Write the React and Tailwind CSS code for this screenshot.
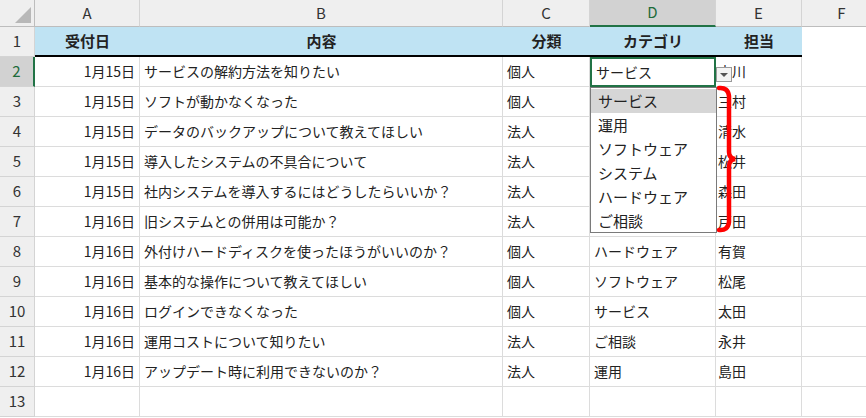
const cols = [
  { k: 'A', w: 105 },
  { k: 'B', w: 363 },
  { k: 'C', w: 87 },
  { k: 'D', w: 126 },
  { k: 'E', w: 86 },
  { k: 'F', w: 80 },
];

const rows = [
  ['1月15日', 'サービスの解約方法を知りたい', '個人', 'サービス', '吉川'],
  ['1月15日', 'ソフトが動かなくなった', '個人', '', '三村'],
  ['1月15日', 'データのバックアップについて教えてほしい', '法人', '', '清水'],
  ['1月15日', '導入したシステムの不具合について', '法人', '', '松井'],
  ['1月15日', '社内システムを導入するにはどうしたらいいか？', '法人', '', '森田'],
  ['1月16日', '旧システムとの併用は可能か？', '法人', '', '戸田'],
  ['1月16日', '外付けハードディスクを使ったほうがいいのか？', '個人', 'ハードウェア', '有賀'],
  ['1月16日', '基本的な操作について教えてほしい', '個人', 'ソフトウェア', '松尾'],
  ['1月16日', 'ログインできなくなった', '個人', 'サービス', '太田'],
  ['1月16日', '運用コストについて知りたい', '法人', 'ご相談', '永井'],
  ['1月16日', 'アップデート時に利用できないのか？', '法人', '運用', '島田'],
];

const options = ['サービス', '運用', 'ソフトウェア', 'システム', 'ハードウェア', 'ご相談'];
const font = { fontFamily: '"Noto Sans CJK JP", "Noto Sans", sans-serif' };

function RowHead({ n, active }) {
  return (
    <div className={`w-[35px] h-[30px] shrink-0 flex items-center justify-center text-[15px] border-r border-b border-[#d4d4d4] ${active ? 'bg-[#d2d2d2] text-[#1e6b3a] border-r-2 border-r-[#217346]' : 'bg-[#efefef] text-[#333]'}`}>{n}</div>
  );
}

export default function App() {
  return (
    <div className="relative w-[866px] h-[418px] bg-white overflow-hidden text-[14px] text-[#222]" style={font}>
      <div className="flex h-[27px]">
        <div className="w-[35px] shrink-0 bg-[#efefef] border-r border-b border-[#bdbdbd] relative">
          <div className="absolute right-[3px] bottom-[3px] w-0 h-0 border-l-[16px] border-l-transparent border-b-[16px] border-b-[#b8b8b8]" />
        </div>
        {cols.map(c => (
          <div key={c.k} style={{ width: c.w }} className={`shrink-0 flex items-center justify-center text-[15px] border-r border-[#d4d4d4] ${c.k === 'D' ? 'bg-[#d2d2d2] text-[#1e6b3a] border-b-2 border-b-[#217346]' : 'bg-[#efefef] text-[#333] border-b border-b-[#bdbdbd]'}`}>{c.k}</div>
        ))}
      </div>
      <div className="flex h-[30px]">
        <RowHead n={1} />
        <div className="flex shrink-0 bg-[#bfe3f3] border-b-2 border-black font-bold text-[15px]">
          <div className="w-[105px] shrink-0 pl-[30px] flex items-center">受付日</div>
          <div className="w-[363px] shrink-0 flex items-center justify-center">内容</div>
          <div className="w-[87px] shrink-0 flex items-center justify-center">分類</div>
          <div className="w-[126px] shrink-0 flex items-center justify-center">カテゴリ</div>
          <div className="w-[86px] shrink-0 flex items-center justify-center">担当</div>
        </div>
      </div>
      {Array.from({ length: 12 }).map((_, i) => {
        const r = rows[i] || ['', '', '', '', ''];
        return (
          <div key={i} className="flex h-[30px]">
            <RowHead n={i + 2} active={i === 0} />
            <div className="w-[105px] shrink-0 pr-[4px] flex items-center justify-end border-r border-b border-[#dcdcdc]">{r[0]}</div>
            <div className="w-[363px] shrink-0 pl-[4px] flex items-center border-r border-b border-[#dcdcdc]">{r[1]}</div>
            <div className="w-[87px] shrink-0 pl-[4px] flex items-center border-r border-b border-[#dcdcdc]">{r[2]}</div>
            <div className={`w-[126px] shrink-0 pl-[4px] flex items-center ${i === 0 ? 'border-2 border-[#217346]' : 'border-r border-b border-[#dcdcdc]'}`}>{r[3]}</div>
            <div className="w-[86px] shrink-0 pl-[2px] flex items-center border-r border-b border-[#dcdcdc]">{r[4]}</div>
            <div className="w-[80px] shrink-0 border-r border-b border-[#dcdcdc]" />
          </div>
        );
      })}
      <div className="absolute left-[590px] top-[87px] w-[127px] h-[146px] bg-white border border-[#7a7a7a] pt-[1px] text-[15px]">
        {options.map((o, i) => (
          <div key={o} className={`h-[24px] pl-[7px] flex items-center ${i === 0 ? 'bg-[#d6d6d6]' : ''}`}>{o}</div>
        ))}
      </div>
      <div className="absolute left-[716px] top-[67px] w-[16px] h-[15px] bg-[#f4f4f4] border border-[#9a9a9a] flex items-center justify-center">
        <div className="w-0 h-0 border-l-[4px] border-r-[4px] border-t-[4px] border-l-transparent border-r-transparent border-t-[#555]" />
      </div>
      <svg className="absolute left-[716px] top-[84px]" width="24" height="150" viewBox="0 0 24 150">
        <path d="M3 4 Q12 3 13 12 L13 68 Q13 74 19 75 Q13 76 13 82 L13 138 Q12 147 3 146" fill="none" stroke="#ff0000" strokeWidth="4.5" strokeLinecap="round" />
      </svg>
    </div>
  );
}
